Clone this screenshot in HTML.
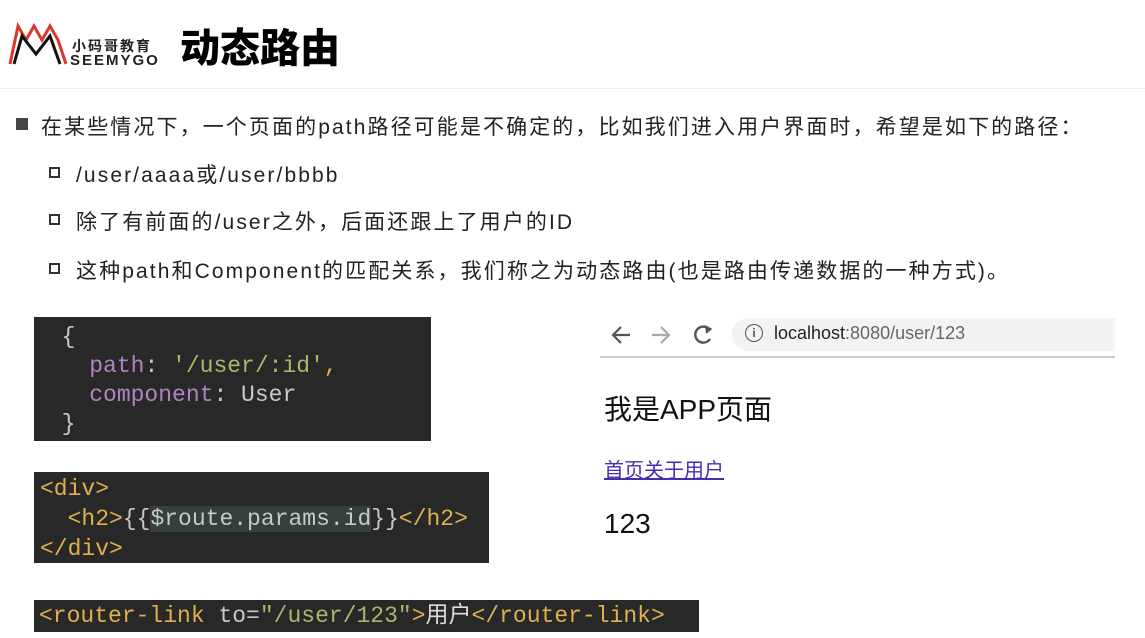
<!DOCTYPE html>
<html><head><meta charset="utf-8"><style>
body{margin:0;width:1145px;height:638px;background:#fff;position:relative;overflow:hidden;font-family:"Liberation Sans","Noto Sans CJK SC",sans-serif;}
.a{position:absolute;white-space:nowrap}
.code{position:absolute;background:#282828;font-family:"Liberation Mono","Noto Sans CJK SC",monospace;font-size:23px;color:#c8c8c8;white-space:pre;overflow:hidden}
.t{color:#e0b04a}.s{color:#a8b86a}.p{color:#b084c0}
.li{font-size:21px;letter-spacing:2.1px;color:#222}
.sq{position:absolute;width:11px;height:11px;border:2px solid #333;box-sizing:border-box}
</style></head><body>
<svg class="a" style="left:8px;top:20px" width="62" height="46" viewBox="0 0 62 46">
<path d="M2 44 L10 6 L18 20 L26 6 L34 20 L42 6 L50 20 L58 44" fill="none" stroke="#d9372a" stroke-width="3"/>
<path d="M6 44 L14 16 L28 34 L42 16 L52 44" fill="none" stroke="#111" stroke-width="3"/>
</svg>
<div class="a" style="left:72px;top:36px;font-size:14px;font-weight:bold;letter-spacing:2px;color:#222">小码哥教育</div>
<div class="a" style="left:70px;top:52px;font-size:15px;font-weight:bold;letter-spacing:2px;color:#222">SEEMYGO</div>
<div class="a" style="left:180px;top:16px;font-size:40px;font-weight:900;color:#000">动态路由</div>
<div class="a" style="left:0;top:88px;width:1145px;height:1px;background:#eee"></div>
<div class="a" style="left:16px;top:118px;width:12px;height:12px;background:#444"></div>
<div class="a li" style="left:41px;top:111px">在某些情况下，一个页面的path路径可能是不确定的，比如我们进入用户界面时，希望是如下的路径：</div>
<div class="sq" style="left:49px;top:167px"></div><div class="a li" style="left:76px;top:159px">/user/aaaa或/user/bbbb</div>
<div class="sq" style="left:49px;top:214px"></div><div class="a li" style="left:76px;top:206px">除了有前面的/user之外，后面还跟上了用户的ID</div>
<div class="sq" style="left:49px;top:263px"></div><div class="a li" style="left:76px;top:255px">这种path和Component的匹配关系，我们称之为动态路由(也是路由传递数据的一种方式)。</div>
<div class="code" style="left:34px;top:317px;width:397px;height:124px;line-height:29px;padding-top:6px;box-sizing:border-box">  {
    <span class="p">path</span>: <span class="s">'/user/:id'</span><span class="t">,</span>
    <span class="p">component</span>: User
  }</div>
<div class="code" style="left:34px;top:472px;width:455px;height:91px;line-height:30px;padding:2px 0 0 6px;box-sizing:border-box"><span class="t">&lt;div&gt;</span>
  <span class="t">&lt;h2&gt;</span>{{<span style="background:#35403a">$route.params.id</span>}}<span class="t">&lt;/h2&gt;</span>
<span class="t">&lt;/div&gt;</span></div>
<div class="code" style="left:34px;top:600px;width:665px;height:32px;line-height:32px;padding-left:5px;box-sizing:border-box"><span class="t">&lt;router-link</span> <span style="color:#c8c8c8">to=</span><span class="s">"/user/123"</span><span class="t">&gt;</span><span style="color:#ddd">用户</span><span class="t">&lt;/router-link&gt;</span></div>
<svg class="a" style="left:610px;top:323px" width="120" height="24" viewBox="0 0 120 24">
<path d="M20 12H4M11 4L3 12L11 20" fill="none" stroke="#555" stroke-width="2.2"/>
<path d="M42 12H58M51 4L59 12L51 20" fill="none" stroke="#aaa" stroke-width="2.2"/>
<path d="M99 6A8 8 0 1 0 100 16" fill="none" stroke="#555" stroke-width="2.4"/>
<path d="M95 3L101 6L96 10" fill="#555" stroke="#555" stroke-width="1.5"/>
</svg>
<div class="a" style="left:732px;top:318px;width:383px;height:33px;background:#f1f3f4;border-radius:16px 0 0 16px"></div>
<div class="a" style="left:745px;top:324px;width:16px;height:16px;border:1.5px solid #555;border-radius:50%;font-size:12px;text-align:center;line-height:16px;color:#555;font-weight:bold">i</div>
<div class="a" style="left:774px;top:323px;font-size:18px;color:#222">localhost<span style="color:#666">:8080/user/123</span></div>
<div class="a" style="left:600px;top:356px;width:515px;height:2px;background:#ccc"></div>
<div class="a" style="left:604px;top:388px;font-size:28px;color:#111">我是APP页面</div>
<div class="a" style="left:604px;top:454px;font-size:20px;color:#4b2ab0;text-decoration:underline">首页关于用户</div>
<div class="a" style="left:604px;top:508px;font-size:28px;color:#111">123</div>
</body></html>
